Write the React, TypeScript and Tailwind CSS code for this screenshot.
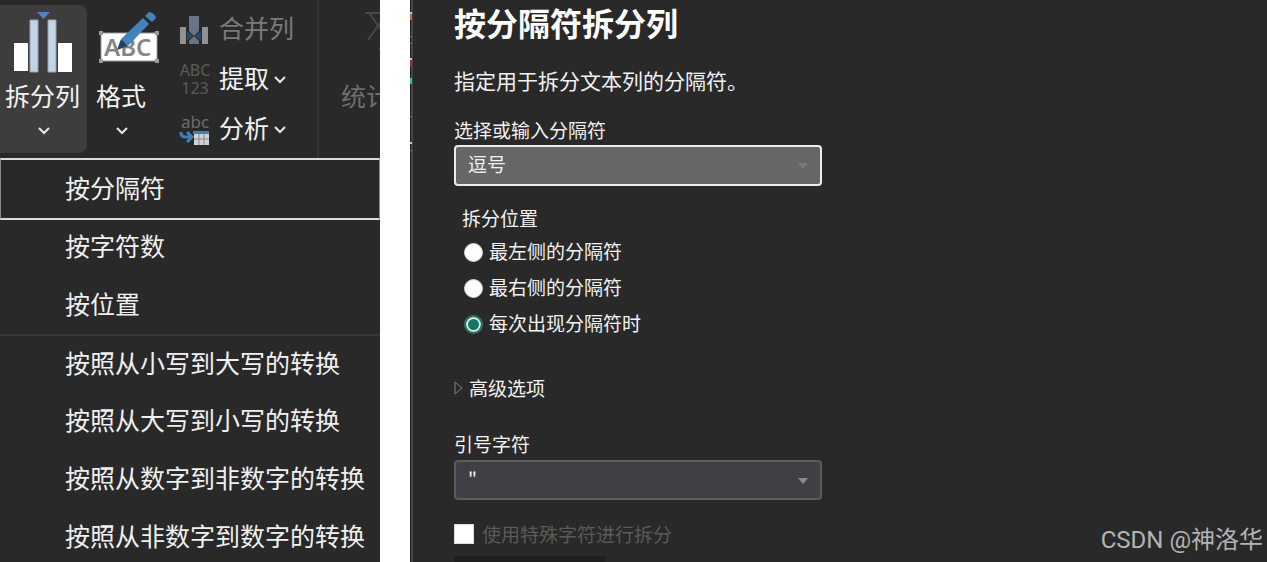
import { useState } from "react";
import type { ReactNode } from "react";

const delimiterMenu = [
  { label: "按字符数" },
  { label: "按位置" },
  { label: "按照从小写到大写的转换", divided: true },
  { label: "按照从大写到小写的转换" },
  { label: "按照从数字到非数字的转换" },
  { label: "按照从非数字到数字的转换" },
];

const positions = [
  { value: "left", label: "最左侧的分隔符" },
  { value: "right", label: "最右侧的分隔符" },
  { value: "each", label: "每次出现分隔符时" },
];

function Chevron() {
  return (
    <svg width="14" height="10" viewBox="0 0 14 10" fill="none" stroke="#e8e8e8" strokeWidth="2">
      <path d="m2 2 5 5 5-5" />
    </svg>
  );
}

function SplitIcon() {
  return (
    <svg width="60" height="62" viewBox="0 0 60 62">
      <path d="M23 0h13l-6.5 7z" fill="#4a86c0" />
      <path d="M0 31h14v28H0zM44 31h14v29H44z" fill="#fff" />
      <path d="M16 8h8v52h-8zM34 8h8v52h-8z" fill="#c3d4e8" stroke="#98a3b0" strokeWidth="1" />
    </svg>
  );
}

function FormatIcon() {
  return (
    <svg width="62" height="54" viewBox="0 0 62 54">
      <rect x="3" y="21" width="56" height="28" fill="#fff" stroke="#9a9a9a" strokeWidth="1" />
      <path d="M1 19h4v4H1zM57 19h4v4h-4zM1 47h4v4H1zM57 47h4v4h-4z" fill="#9a9a9a" />
      <text x="6" y="44" fontSize="24" fontFamily="Noto Sans, sans-serif" fontWeight="600" fill="#858585">
        ABC
      </text>
      <path d="m23 27 22-21 6 6-21 22z" fill="#4382bd" />
      <path d="m47 4 4-4q6 1 7 6l-4 4z" fill="#4382bd" />
      <path d="m23 27 7 7-11 4z" fill="#26415c" />
    </svg>
  );
}

function MergeIcon() {
  return (
    <svg className="mt-0.5" width="30" height="30" viewBox="0 0 30 30">
      <path d="M1 12h6v17H1zM23 12h6v17h-6z" fill="#929292" />
      <path d="M10 1h10v15l-5 5-5-5z" fill="#697584" />
      <path d="M10 29v-3l5-5 5 5v3z" fill="#697584" />
      <path d="m8 16 6 5-6 5zM22 16l-6 5 6 5z" fill="#274a6b" />
    </svg>
  );
}

function ExtractIcon() {
  return (
    <span className="flex w-8 flex-col font-['Noto_Sans',sans-serif] text-[16px] leading-[18px] text-[#5c5c5c]">
      <span>ABC</span>
      <span>123</span>
    </span>
  );
}

function ParseIcon() {
  return (
    <span className="flex w-8 flex-col font-['Noto_Sans',sans-serif] text-[17px] leading-[18px] text-[#6c6c6c]">
      abc
      <svg width="32" height="14" viewBox="0 0 32 14">
        <path d="M2 1v1q0 4 5 4h5M8 1l5 5-5 5" fill="none" stroke="#417fb9" strokeWidth="3" />
        <path d="M15 1h15v13H15z" fill="#d2d2d2" />
        <path d="M14 0h16v3H14z" fill="#417fb9" />
        <path d="M20 3v11M25 3v11M15 8h15" stroke="#8a8a8a" strokeWidth="1" />
      </svg>
    </span>
  );
}

function Select({
  id,
  className,
  arrow,
  children,
}: {
  id: string;
  className: string;
  arrow: string;
  children: ReactNode;
}) {
  return (
    <div className="relative w-full max-w-[368px]">
      <select
        id={id}
        className={`block w-full appearance-none rounded px-3 pb-1 text-[19px] text-[#f0f0f0] outline-none ${className}`}
      >
        {children}
      </select>
      <svg className="pointer-events-none absolute top-4.5 right-3.5" width="10" height="6" viewBox="0 0 10 6">
        <path d="M0 0h10L5 6z" fill={arrow} />
      </svg>
    </div>
  );
}

function Ribbon() {
  return (
    <div className="flex h-[158px] bg-[#292929] text-[25px] leading-[30px] text-[#f2f2f2]">
      <button className="my-[5px] flex w-[87px] shrink-0 flex-col items-center rounded-r-lg bg-[#3d3d3d] pt-[7px]">
        <SplitIcon />
        <span className="mt-1.5 mr-0.5">拆分列</span>
        <span className="mt-4"><Chevron /></span>
      </button>
      <button className="flex w-[84px] shrink-0 flex-col items-center pt-3">
        <span><FormatIcon /></span>
        <span className="mt-3.5 mr-4">格式</span>
        <span className="mt-4 mr-3.5"><Chevron /></span>
      </button>

      <div className="flex w-[148px] shrink-0 flex-col items-start gap-5 border-r-2 border-[#363636] pt-3.5 pl-2">
        <button disabled className="flex h-[30px] items-center gap-2.5 text-[#7b7b7b]">
          <MergeIcon />
          <span className="mb-1">合并列</span>
        </button>
        <button className="flex h-[30px] items-center gap-2">
          <ExtractIcon />
          <span className="mb-1">提取</span>
          <span className="-ml-1 pt-0.5"><Chevron /></span>
        </button>
        <button className="flex h-[30px] items-center gap-2">
          <ParseIcon />
          <span className="mb-1">分析</span>
          <span className="-ml-1 pt-0.5"><Chevron /></span>
        </button>
      </div>

      <button disabled className="flex shrink-0 flex-col items-start pt-3 pl-[22px] text-[#6f6f6f]">
        <svg className="ml-6" width="34" height="54" viewBox="0 0 34 54" fill="none" stroke="#484848" strokeWidth="2">
          <path d="M0 1h30M4 1l20 27M22 1 3 28M14 36l4 3M14 60l6-2" />
        </svg>
        <span className="mt-3.5 whitespace-nowrap">统计</span>
      </button>
    </div>
  );
}

function SplitMenu() {
  return (
    <ul className="bg-[#292929] text-[25px] text-[#f0f0f0]">
      <li className="relative -mb-0.5">
        <button className="flex h-[62px] w-full items-center border-x border-y-2 border-x-[#8a8a8a] border-y-[#dcdcdc] pb-0.5 pl-16 text-left">
          按分隔符
        </button>
      </li>
      {delimiterMenu.map((item) => (
        <li key={item.label} className={item.divided ? "border-t-2 border-[#373737]" : ""}>
          <button
            className={`flex w-full items-center pb-0.5 pl-[65px] text-left whitespace-nowrap ${
              item.divided ? "h-14" : "h-[58px]"
            }`}
          >
            {item.label}
          </button>
        </li>
      ))}
    </ul>
  );
}

// Edge of the window that the dialog covers
function WindowEdge() {
  return (
    <svg className="w-[3px] shrink-0" width="3" height="562" viewBox="0 0 3 562">
      <path d="M0 0h1v562H0z" fill="#1f1f1f" />
      <path d="M1 0h2v562H1z" fill="#464646" />
      <path d="M0 12h2v2H0zM0 58h2v2H0zM0 142h2v2H0z" fill="#c4c4c4" />
      <path d="M0 36h2v1H0zM0 43h2v1H0zM0 116h2v1H0zM0 150h2v1H0z" fill="#777" />
      <path d="M0 14h2v6H0z" fill="#b3683a" />
      <path d="M0 60h2v7H0z" fill="#9c2f2f" />
      <path d="M0 78h2v6H0z" fill="#16c5b8" />
    </svg>
  );
}

function SplitDialog() {
  const [position, setPosition] = useState("each");

  return (
    <form className="flex min-w-0 flex-1 flex-col bg-[#292929] pl-[41px] text-[19px] leading-6 text-[#f2f2f2]">
      <h1 className="pt-0.5 text-[32px] leading-10 font-bold text-white">按分隔符拆分列</h1>
      <p className="mt-6 text-[21px] leading-7">指定用于拆分文本列的分隔符。</p>

      <label htmlFor="delimiter" className="mt-6">选择或输入分隔符</label>
      <div className="mt-[3px]">
        <Select id="delimiter" className="h-[41px] border-2 border-[#ececec] bg-[#666]" arrow="#7a7a7a">
          <option>逗号</option>
        </Select>
      </div>

      <fieldset className="mt-5 pl-2">
        <legend>拆分位置</legend>
        <div className="mt-2.5 flex flex-col gap-3">
          {positions.map((item) => (
            <label key={item.value} className="flex h-6 items-center gap-1.5">
              <input
                type="radio"
                name="position"
                value={item.value}
                checked={position === item.value}
                onChange={() => setPosition(item.value)}
                className="ml-0.5 size-[19px] appearance-none rounded-full border border-[#d0d0d0] bg-white checked:border-2 checked:border-[#2c7567] checked:bg-[#117865] checked:shadow-[inset_0_0_0_2px_#e6e6e6]"
              />
              <span className="-mt-0.5">{item.label}</span>
            </label>
          ))}
        </div>
      </fieldset>

      <button type="button" className="mt-10 flex items-center gap-1.5 self-start">
        <svg width="9" height="14" viewBox="0 0 9 14" fill="none" stroke="#808080">
          <path d="M1 1v12l7-6z" />
        </svg>
        高级选项
      </button>

      <label htmlFor="quote" className="mt-8">引号字符</label>
      <div className="mt-1">
        <Select id="quote" className="h-10 border-2 border-[#5c5c5c] bg-[#3f3f45]" arrow="#8a8a8a">
          <option>"</option>
        </Select>
      </div>

      <label className="mt-[22px] flex items-center gap-2 text-[#5a5a5a]">
        <input type="checkbox" disabled className="size-5 appearance-none border border-[#dedede] bg-white" />
        使用特殊字符进行拆分
      </label>
      <div className="mt-2.5 h-1.5 w-[151px] bg-[#1f1f1f]" />
    </form>
  );
}

export default function App() {
  return (
    <main className="relative flex h-screen overflow-hidden bg-white font-['Noto_Sans_CJK_SC',sans-serif]">
      <section className="w-[30%] shrink-0 overflow-hidden">
        <Ribbon />
        <SplitMenu />
      </section>
      <section className="ml-[30px] flex min-w-0 flex-1 bg-[#292929]">
        <WindowEdge />
        <SplitDialog />
      </section>
      <span className="absolute right-1 bottom-1.5 font-['Roboto','Noto_Sans_CJK_SC',sans-serif] text-[24px] leading-8 text-[#b4b4b4]">
        CSDN @神洛华
      </span>
    </main>
  );
}
